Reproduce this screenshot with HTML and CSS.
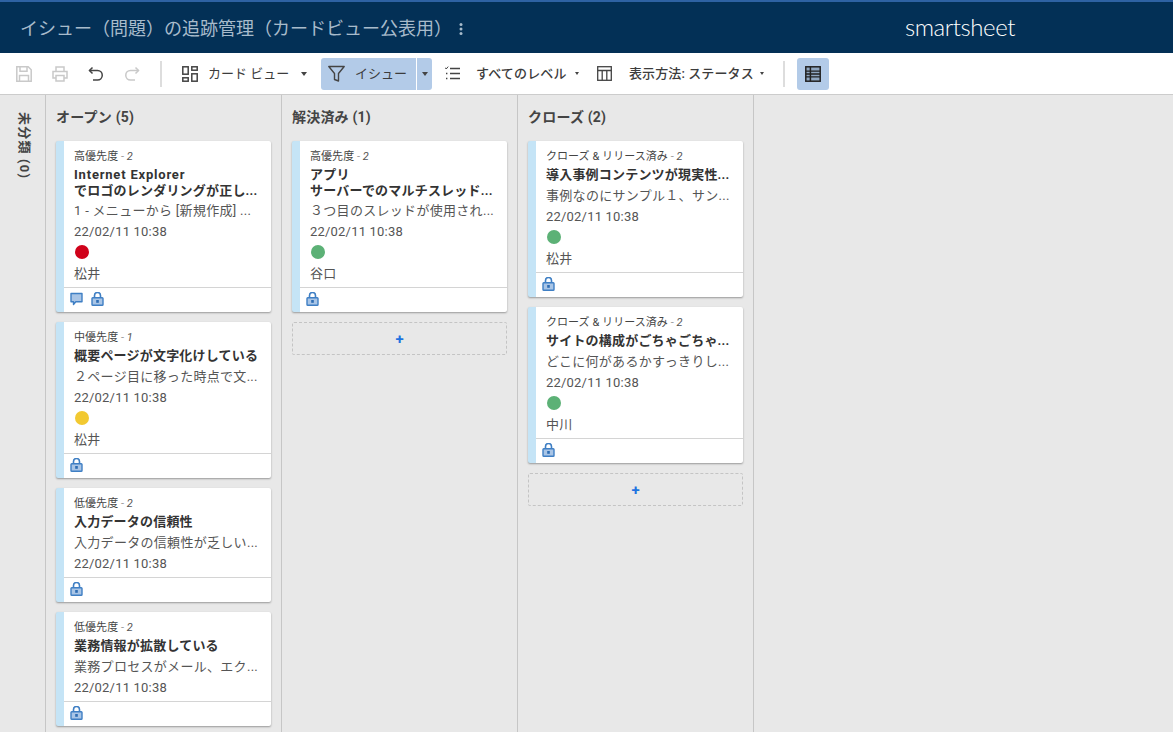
FILE: index.html
```html
<!DOCTYPE html>
<html lang="ja">
<head>
<meta charset="utf-8">
<title>イシュー（問題）の追跡管理</title>
<link rel="stylesheet" href="styles.css">
</head>
<body>
<svg class="defs" width="0" height="0" aria-hidden="true">
  <symbol id="lock" viewBox="0 0 13 14">
    <path d="M3.500 6.500V3.500a3 3 0 0 1 6 0v3" fill="none" stroke="#3f7fc4" stroke-width="1.600"/>
    <rect x="1" y="5.800" width="11" height="7.400" rx=".8" fill="#a9c5e6" stroke="#3f7fc4" stroke-width="1.400"/>
    <rect x="5.200" y="8" width="2.600" height="2.800" fill="#2f6db3"/>
  </symbol>
  <symbol id="comment" viewBox="0 0 13 14">
    <path d="M1 1.500h11v8.300H5.800L3.500 12.500V9.800H1z" fill="#a9c5e6" stroke="#3f7fc4" stroke-width="1.400" stroke-linejoin="round"/>
  </symbol>
</svg>
<header class="titlebar">
  <h1 class="sheet-title">イシュー（問題）の追跡管理（カードビュー公表用）</h1>
  <svg class="kebab" width="4" height="14" viewBox="0 0 4 14"><circle cx="2" cy="2.500" r="1.500"/><circle cx="2" cy="7" r="1.500"/><circle cx="2" cy="11.500" r="1.500"/></svg>
  <div class="logo">smartsheet</div>
</header>
<nav class="toolbar">
  <svg class="ti i-save" width="16" height="16" viewBox="0 0 16 16" fill="none" stroke="#c9c9c9" stroke-width="1.500"><path d="M.8.800h11.400l3 3v11.400H.8z"/><path d="M4 .8v4.400h7V.8M3.500 15v-5.500h9V15"/></svg>
  <svg class="ti i-print" width="16" height="16" viewBox="0 0 16 16" fill="none" stroke="#c9c9c9" stroke-width="1.500"><path d="M4 5V1h8v4M4 12H1V5.500h14V12h-3"/><path d="M4 9.500h8v5.500H4z"/></svg>
  <svg class="ti i-undo" width="16" height="16" viewBox="0 0 16 16" fill="none" stroke="#444" stroke-width="1.500"><path d="M4.500 1.500 1.500 4.500l3 3"/><path d="M1.500 4.500h8a4.700 4.700 0 0 1 0 9.500H5"/></svg>
  <svg class="ti i-redo" width="16" height="16" viewBox="0 0 16 16" fill="none" stroke="#c9c9c9" stroke-width="1.500"><path d="M11.500 1.500l3 3-3 3"/><path d="M14.500 4.500h-8a4.700 4.700 0 0 0 0 9.500H11"/></svg>
  <span class="sep sep-a"></span>
  <svg class="ti i-card" width="16" height="16" viewBox="0 0 16 16" fill="none" stroke="#444" stroke-width="1.500"><rect x=".8" y=".8" width="5.400" height="7.400"/><rect x="9.800" y=".8" width="5.400" height="3.400"/><rect x=".8" y="11.800" width="5.400" height="3.400"/><rect x="9.800" y="7.800" width="5.400" height="7.400"/></svg>
  <span class="tl tl-card">カード ビュー</span>
  <span class="caret c-card"></span>
  <div class="filter">
    <div class="filter-main">
      <svg width="17" height="17" viewBox="0 0 17 17" fill="none" stroke="#444" stroke-width="1.400"><path d="M.8 1.500h15.400L10.500 8.500v7.500l-4-1.500v-6z" stroke-linejoin="round"/></svg>
      <span class="tl tl-filter">イシュー</span>
    </div>
    <div class="filter-arrow"><span class="caret"></span></div>
  </div>
  <svg class="ti i-list" width="15" height="15" viewBox="0 0 15 15" fill="none" stroke="#444"><path d="M5 2.500h10M5 7.500h10M5 12.500h10" stroke-width="1.300"/><path d="M0 1.500l1.200 1.500L3.200.6" stroke-width="1"/><path d="M1 6.800h1.400v1.400H1zM1 11.800h1.400v1.400H1z" fill="#444" stroke="none"/></svg>
  <span class="tl tl-level">すべてのレベル</span>
  <span class="caret small c-level"></span>
  <svg class="ti i-table" width="15" height="15" viewBox="0 0 15 15" fill="none" stroke="#444" stroke-width="1.300"><rect x=".7" y=".7" width="13.600" height="13.600"/><path d="M.7 4.500h13.600M5.200 4.500v9.800M9.800 4.500v9.800"/></svg>
  <span class="tl tl-show">表示方法: ステータス</span>
  <span class="caret small c-show"></span>
  <span class="sep sep-b"></span>
  <div class="grid-btn">
    <svg width="16" height="16" viewBox="0 0 16 16"><rect x=".8" y=".8" width="14.400" height="14.400" fill="#8fa6c0" stroke="#222" stroke-width="1.500"/><path d="M.8 5.200h14.400M.8 8h14.400M.8 10.800h14.400" stroke="#222" stroke-width="1.300"/><path d="M5.400.8v14.400" stroke="#222" stroke-width="1.500"/></svg>
  </div>
</nav>
<main class="board">
  <aside class="col-collapsed"><span class="col-collapsed-label">未分類 (0)</span></aside>

  <section class="col">
    <h2 class="col-title">オープン (5)</h2>
    <article class="card">
      <div class="card-body">
        <div class="meta">高優先度<span class="dim"> - </span><i>2</i></div>
        <div class="title latin">Internet Explorer</div>
        <div class="title">でロゴのレンダリングが正し...</div>
        <div class="line desc">1 - メニューから [新規作成] ...</div>
        <div class="line">22/02/11 10:38</div>
        <div class="dotline"><span class="dot red"></span></div>
        <div class="line">松井</div>
      </div>
      <div class="card-foot"><svg class="ic"><use href="#comment"/></svg><svg class="ic"><use href="#lock"/></svg></div>
    </article>
    <article class="card">
      <div class="card-body">
        <div class="meta">中優先度<span class="dim"> - </span><i>1</i></div>
        <div class="title">概要ページが文字化けしている</div>
        <div class="line desc">２ページ目に移った時点で文...</div>
        <div class="line">22/02/11 10:38</div>
        <div class="dotline"><span class="dot yellow"></span></div>
        <div class="line">松井</div>
      </div>
      <div class="card-foot"><svg class="ic"><use href="#lock"/></svg></div>
    </article>
    <article class="card">
      <div class="card-body">
        <div class="meta">低優先度<span class="dim"> - </span><i>2</i></div>
        <div class="title">入力データの信頼性</div>
        <div class="line desc">入力データの信頼性が乏しい...</div>
        <div class="line">22/02/11 10:38</div>
      </div>
      <div class="card-foot"><svg class="ic"><use href="#lock"/></svg></div>
    </article>
    <article class="card">
      <div class="card-body">
        <div class="meta">低優先度<span class="dim"> - </span><i>2</i></div>
        <div class="title">業務情報が拡散している</div>
        <div class="line desc">業務プロセスがメール、エク...</div>
        <div class="line">22/02/11 10:38</div>
      </div>
      <div class="card-foot"><svg class="ic"><use href="#lock"/></svg></div>
    </article>
  </section>

  <section class="col">
    <h2 class="col-title">解決済み (1)</h2>
    <article class="card">
      <div class="card-body">
        <div class="meta">高優先度<span class="dim"> - </span><i>2</i></div>
        <div class="title">アプリ</div>
        <div class="title">サーバーでのマルチスレッド...</div>
        <div class="line desc">３つ目のスレッドが使用され...</div>
        <div class="line">22/02/11 10:38</div>
        <div class="dotline"><span class="dot green"></span></div>
        <div class="line">谷口</div>
      </div>
      <div class="card-foot"><svg class="ic"><use href="#lock"/></svg></div>
    </article>
    <div class="add">+</div>
  </section>

  <section class="col">
    <h2 class="col-title">クローズ (2)</h2>
    <article class="card">
      <div class="card-body">
        <div class="meta">クローズ &amp; リリース済み<span class="dim"> - </span><i>2</i></div>
        <div class="title">導入事例コンテンツが現実性...</div>
        <div class="line desc">事例なのにサンプル１、サン...</div>
        <div class="line">22/02/11 10:38</div>
        <div class="dotline"><span class="dot green"></span></div>
        <div class="line">松井</div>
      </div>
      <div class="card-foot"><svg class="ic"><use href="#lock"/></svg></div>
    </article>
    <article class="card">
      <div class="card-body">
        <div class="meta">クローズ &amp; リリース済み<span class="dim"> - </span><i>2</i></div>
        <div class="title">サイトの構成がごちゃごちゃ...</div>
        <div class="line desc">どこに何があるかすっきりし...</div>
        <div class="line">22/02/11 10:38</div>
        <div class="dotline"><span class="dot green"></span></div>
        <div class="line">中川</div>
      </div>
      <div class="card-foot"><svg class="ic"><use href="#lock"/></svg></div>
    </article>
    <div class="add">+</div>
  </section>
</main>
</body>
</html>
```
FILE: styles.css
```css
* { box-sizing: border-box; }
html, body { height: 100%; }
body {
  margin: 0;
  height: 732px;
  overflow: hidden;
  display: flex;
  flex-direction: column;
  background: #e8e8e8;
  color: #444;
  font-family: Roboto, "Noto Sans CJK JP", sans-serif;
}
.defs { position: absolute; }

.titlebar {
  flex: none;
  height: 53px;
  display: flex;
  align-items: center;
  padding: 3px 0 0 20px;
  background: #033056;
  border-top: 2px solid #2e62a3;
}
.sheet-title {
  margin: 0;
  font-size: 18px;
  font-weight: 400;
  line-height: 24px;
  color: #a8bbcb;
}
.kebab { margin-left: 7px; fill: #a8bbcb; }
.logo {
  margin: 0 0 4px 442px;
  font-family: Lato, sans-serif;
  font-size: 24px;
  font-weight: 300;
  letter-spacing: -.45px;
  line-height: 24px;
  color: #fff;
}

.toolbar {
  flex: none;
  height: 42px;
  display: flex;
  align-items: center;
  background: #fff;
  border-bottom: 1px solid #ccc;
  padding-left: 16px;
  font-size: 13px;
  white-space: nowrap;
}
.ti { flex: none; }
.i-print, .i-undo, .i-redo { margin-left: 20px; }
.sep { flex: none; width: 2px; height: 26px; background: #ddd; }
.sep-a { margin-left: 20px; }
.i-card { margin-left: 20px; }
.tl { color: #3c3c3c; line-height: 16px; }
.tl-card { margin-left: 10px; width: 82px; }
.caret {
  display: inline-block;
  width: 0;
  height: 0;
  border-left: 3.500px solid transparent;
  border-right: 3.500px solid transparent;
  border-top: 4px solid #444;
}
.caret.small { border-left-width: 2.500px; border-right-width: 2.500px; border-top-width: 3px; }
.c-card { margin-left: 11px; }
.filter {
  flex: none;
  margin-left: 14px;
  height: 32px;
  display: flex;
  gap: 1px;
}
.filter-main {
  width: 95px;
  display: flex;
  align-items: center;
  gap: 10px;
  padding-left: 7px;
  background: #b3cbe8;
  border-radius: 3px 0 0 3px;
}
.filter-arrow {
  width: 15px;
  display: flex;
  align-items: center;
  justify-content: center;
  background: #b3cbe8;
  border-radius: 0 3px 3px 0;
}
.i-list { margin-left: 13px; }
.tl-level { margin-left: 16px; width: 91px; letter-spacing: .15px; font-weight: 500; }
.c-level { margin-left: 8px; }
.i-table { margin-left: 18px; }
.tl-show { margin-left: 17px; width: 124px; letter-spacing: .1px; font-weight: 500; }
.c-show { margin-left: 7px; }
.sep-b { margin-left: 19px; }
.grid-btn {
  flex: none;
  margin-left: 12px;
  width: 32px;
  height: 32px;
  display: flex;
  align-items: center;
  justify-content: center;
  background: #b3cbe8;
  border-radius: 3px;
}

.board { flex: 1; min-height: 0; display: flex; overflow: hidden; }
.col-collapsed {
  flex: none;
  width: 46px;
  border-right: 1px solid #c6c6c6;
  padding: 17px 0 0 15px;
}
.col-collapsed-label {
  writing-mode: vertical-rl;
  text-orientation: sideways;
  font-size: 13px;
  font-weight: 700;
  letter-spacing: 1.2px;
  line-height: 18px;
}
.col {
  flex: none;
  width: 236px;
  padding: 0 10px;
  border-right: 1px solid #c6c6c6;
}
.col-title {
  margin: 0;
  height: 46px;
  padding-top: 13px;
  font-size: 14px;
  font-weight: 700;
  letter-spacing: .2px;
  line-height: 18px;
  color: #444;
}
.card {
  width: 215px;
  margin-bottom: 10px;
  background: #fff;
  border-left: 8px solid #c5e4f6;
  border-radius: 2px;
  box-shadow: 0 1px 2px rgba(0, 0, 0, .35);
}
.card-body { padding: 9px 10px 4px; }
.meta { font-size: 11px; line-height: 14px; letter-spacing: .05px; color: #444; white-space: nowrap; }
.meta i { font-style: italic; color: #555; }
.dim { color: #999; }
.title {
  font-size: 13px;
  font-weight: 700;
  line-height: 15px;
  letter-spacing: .2px;
  color: #333;
  white-space: nowrap;
  overflow: hidden;
}
.latin { letter-spacing: .8px; }
.meta + .title { margin-top: 3px; }
.title + .title { margin-top: 1px; margin-bottom: -1px; }
.line { height: 21px; padding-top: 2px; font-size: 13px; line-height: 19px; letter-spacing: .2px; color: #555; white-space: nowrap; }
.dotline { height: 21px; display: flex; align-items: center; }
.desc { margin-top: 2px; letter-spacing: .3px; }
.dot { width: 14px; height: 14px; border-radius: 50%; margin-left: 1px; }
.red { background: #d0021b; }
.yellow { background: #f2c931; }
.green { background: #5cb176; }
.card-foot {
  height: 25px;
  display: flex;
  align-items: center;
  gap: 8px;
  padding: 0 0 2px 6px;
  border-top: 1px solid #d4d4d4;
}
.ic { width: 13px; height: 14px; }
.add {
  width: 215px;
  height: 33px;
  display: flex;
  align-items: center;
  justify-content: center;
  border: 1px dashed #c4c4c4;
  border-radius: 2px;
  font-size: 15px;
  font-weight: 700;
  color: #1f73e0;
}
```
